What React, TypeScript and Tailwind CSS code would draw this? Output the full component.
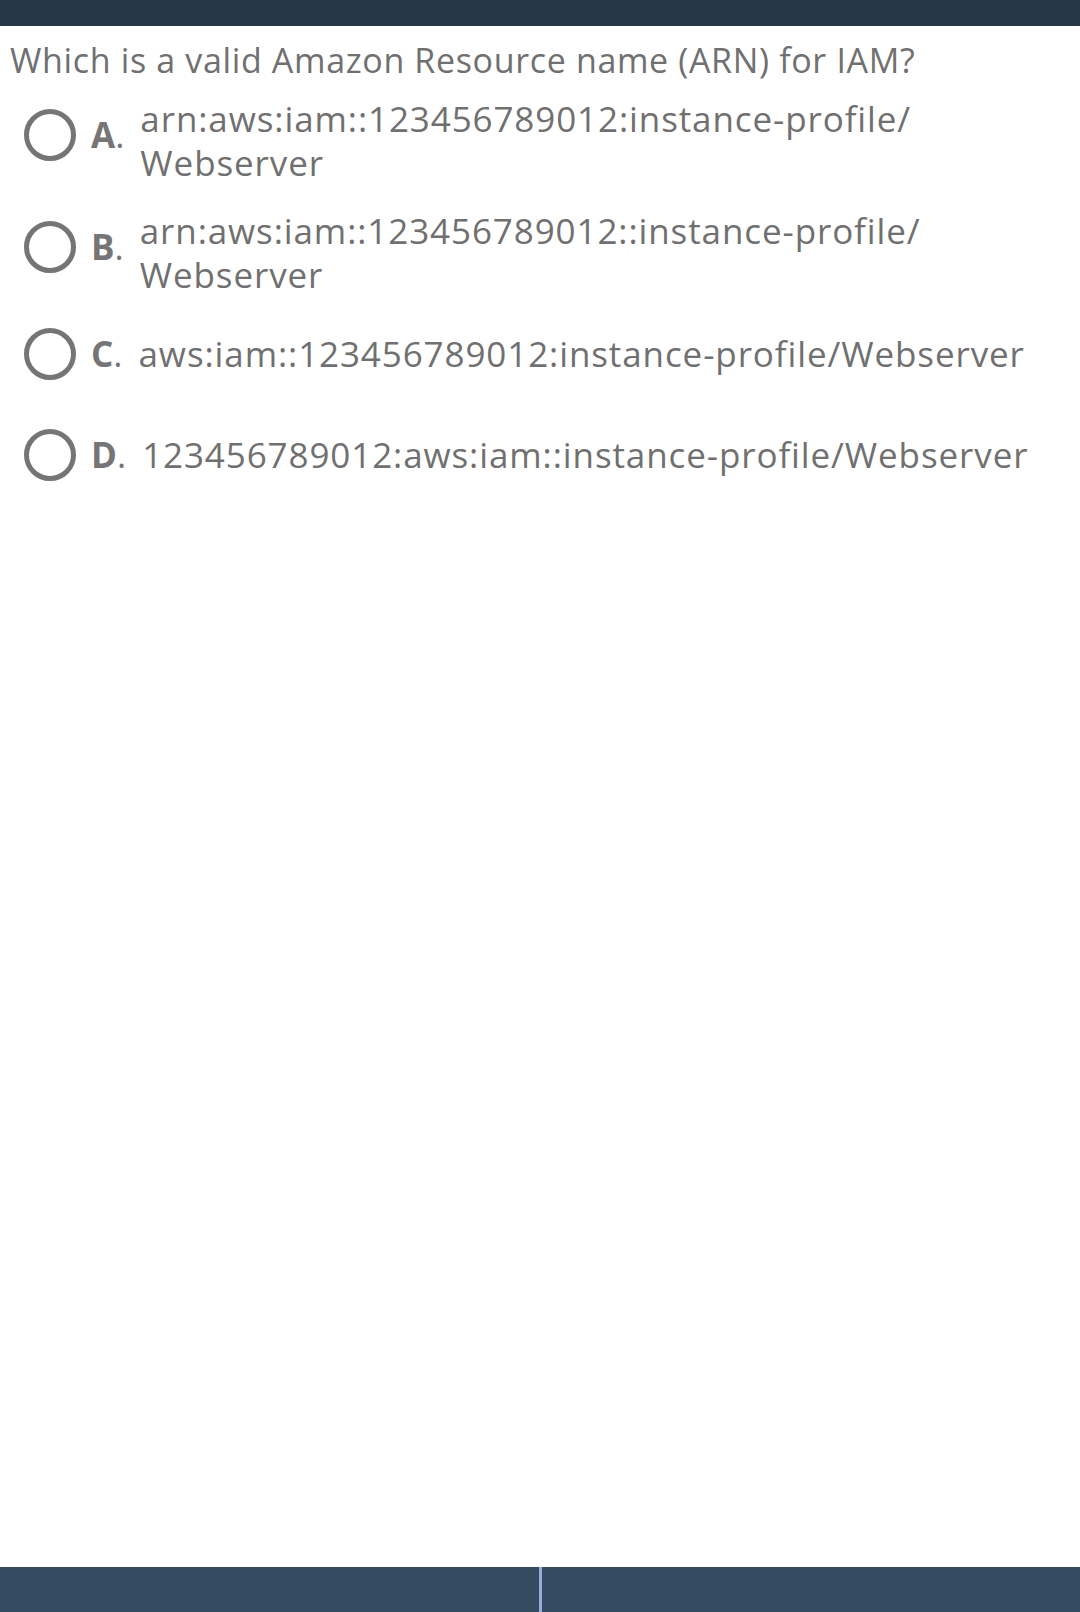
const options = [
  { letter: 'A', head: 'arn:aws:iam::123456789012:instance-profile/', tail: 'Webserver', wrap: true },
  { letter: 'B', head: 'arn:aws:iam::123456789012::instance-profile/', tail: 'Webserver', wrap: true },
  { letter: 'C', head: 'aws:iam::123456789012:instance-profile/', tail: 'Webserver', wrap: false },
  { letter: 'D', head: '123456789012:aws:iam::instance-profile/', tail: 'Webserver', wrap: false },
];

export default function App() {
  return (
    <div className="w-[1080px] h-[1612px] flex flex-col bg-white font-['Open_Sans',sans-serif]">
      {/* Top bar */}
      <div className="h-[26px] bg-[#273747] shrink-0" />

      <div className="flex-1 pt-[15px]">
        {/* Question */}
        <h1 className="pl-[10px] text-[34px] leading-[38px] text-[#707070] tracking-[0.65px]">
          Which is a valid Amazon Resource name (ARN) for IAM?
        </h1>

        {/* Options */}
        <div className="flex flex-col">
          {options.map((o) => (
            <label key={o.letter} className="flex items-center pl-[24px] pr-[10px] py-[6px] min-h-[101px]">
              <span className="w-[52px] h-[52px] rounded-full border-[5px] border-[#757575] shrink-0" />
              <span className="ml-[15px] text-[35px] leading-[44px] font-bold text-[#757575] shrink-0">
                {o.letter}
                <span className="font-normal">.</span>
              </span>
              <span
                className={
                  o.wrap
                    ? 'ml-[16px] mt-[12px] text-[35px] leading-[44px] tracking-[0.9px] text-[#707070]'
                    : 'ml-[16px] text-[35px] leading-[44px] tracking-[0.9px] text-[#707070]'
                }
              >
                {o.head}
                <wbr />
                {o.tail}
              </span>
            </label>
          ))}
        </div>
      </div>

      {/* Bottom bar */}
      <div className="h-[45px] bg-[#354b5f] flex shrink-0">
        <div className="flex-1" />
        <div className="w-[3px] bg-[#9fa8da]" />
        <div className="flex-1" />
      </div>
    </div>
  );
}
